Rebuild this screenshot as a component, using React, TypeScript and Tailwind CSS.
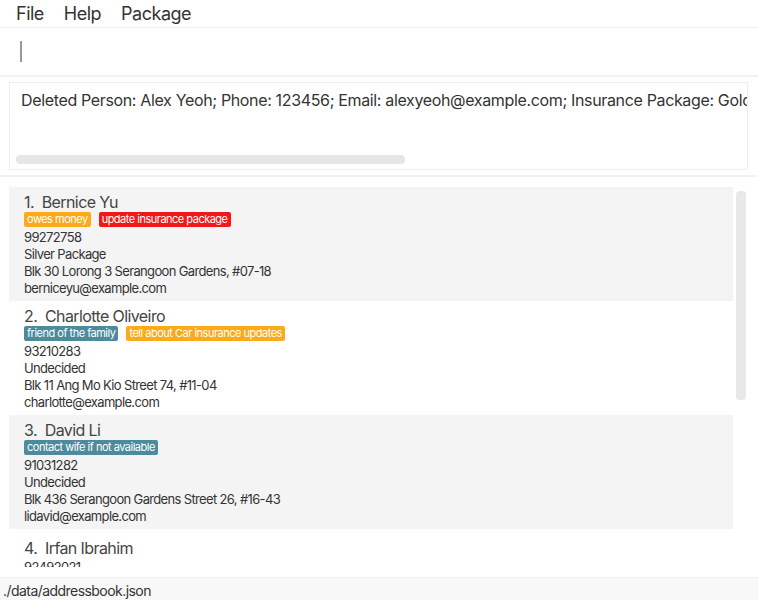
import React from "react";

type Tag = { label: string; color: string };
type Person = {
  name: string;
  tags: Tag[];
  phone: string;
  pkg: string;
  address: string;
  email: string;
};

const ORANGE = "bg-[#fbaa1a]";
const RED = "bg-[#f51717]";
const TEAL = "bg-[#4d8a9c]";

const people: Person[] = [
  {
    name: "Bernice Yu",
    tags: [
      { label: "owes money", color: ORANGE },
      { label: "update insurance package", color: RED },
    ],
    phone: "99272758",
    pkg: "Silver Package",
    address: "Blk 30 Lorong 3 Serangoon Gardens, #07-18",
    email: "berniceyu@example.com",
  },
  {
    name: "Charlotte Oliveiro",
    tags: [
      { label: "friend of the family", color: TEAL },
      { label: "tell about Car insurance updates", color: ORANGE },
    ],
    phone: "93210283",
    pkg: "Undecided",
    address: "Blk 11 Ang Mo Kio Street 74, #11-04",
    email: "charlotte@example.com",
  },
  {
    name: "David Li",
    tags: [{ label: "contact wife if not available", color: TEAL }],
    phone: "91031282",
    pkg: "Undecided",
    address: "Blk 436 Serangoon Gardens Street 26, #16-43",
    email: "lidavid@example.com",
  },
  {
    name: "Irfan Ibrahim",
    tags: [],
    phone: "92492021",
    pkg: "Undecided",
    address: "Blk 47 Tampines Street 20, #17-35",
    email: "irfan@example.com",
  },
];

function Card({ p, i }: { p: Person; i: number }) {
  const bg = i % 2 === 0 ? "bg-[#f4f4f4]" : "bg-white";
  const hasTags = p.tags.length > 0;
  return (
    <div
      className={`${bg} h-[114px] shrink-0 pl-[15px] ${hasTags ? "pt-[5px]" : "pt-[9px]"} flex flex-col`}
    >
      <div className="h-[20px] text-[16px] leading-[20px] tracking-[-0.6px] text-[#444]">
        {i + 1}.&nbsp;&nbsp;{p.name}
      </div>
      {hasTags && (
        <div className="flex gap-[8px] h-[15px]">
          {p.tags.map((t) => (
            <span
              key={t.label}
              className={`${t.color} text-white text-[11px] leading-[15px] tracking-[-0.5px] px-[3px] rounded-[2px]`}
            >
              {t.label}
            </span>
          ))}
        </div>
      )}
      <div
        className={`${hasTags ? "mt-[2px]" : "mt-[1px]"} text-[13px] leading-[17px] tracking-[-0.65px] text-[#333] flex flex-col`}
      >
        <span>{p.phone}</span>
        <span>{p.pkg}</span>
        <span>{p.address}</span>
        <span>{p.email}</span>
      </div>
    </div>
  );
}

export default function App() {
  return (
    <div
      className="w-[758px] h-[600px] bg-white flex flex-col overflow-hidden text-[#333]"
      style={{ fontFamily: "Inter, 'Noto Sans', sans-serif" }}
    >
      {/* Menu bar */}
      <div className="h-[28px] shrink-0 flex items-center gap-[20px] px-[16px] text-[18px] tracking-[-0.5px] text-[#333] border-b border-[#f0f0f0]">
        <span>File</span>
        <span>Help</span>
        <span>Package</span>
      </div>

      {/* Command box */}
      <div className="h-[49px] shrink-0 flex items-center pl-[20px] border-b-2 border-[#f2f2f2]">
        <div className="w-[2px] h-[21px] bg-[#999]" />
      </div>

      {/* Result display */}
      <div className="h-[100px] shrink-0 pt-[5px] pb-[5px] pl-[9px] pr-[10px] border-b-2 border-[#f2f2f2]">
        <div className="h-full border border-[#eeeeee] flex flex-col overflow-hidden">
          <div className="pl-[11px] pt-[6px] text-[16px] leading-[22px] tracking-[-0.35px] text-[#333] whitespace-nowrap overflow-hidden">
            Deleted Person: Alex Yeoh; Phone: 123456; Email: alexyeoh@example.com; Insurance Package: Gold Package
          </div>
          <div className="flex-1" />
          <div className="ml-[6px] mb-[5px] w-[389px] h-[9px] rounded-[4px] bg-[#e6e6e6]" />
        </div>
      </div>

      {/* List */}
      <div className="flex-1 min-h-0 flex pt-[10px] pb-[10px] pl-[9px]">
        <div className="w-[724px] flex flex-col overflow-hidden">
          {people.map((p, i) => (
            <Card key={p.name} p={p} i={i} />
          ))}
        </div>
        <div className="ml-[3px] mt-[4px] w-[10px] h-[209px] rounded-[4px] bg-[#e8e8e8]" />
      </div>

      {/* Status bar */}
      <div className="h-[23px] shrink-0 bg-[#f8f8f8] border-t border-[#eeeeee] pl-[3px] pt-[3px] text-[14px] leading-[20px] tracking-[-0.55px] text-[#333]">
        ./data/addressbook.json
      </div>
    </div>
  );
}
